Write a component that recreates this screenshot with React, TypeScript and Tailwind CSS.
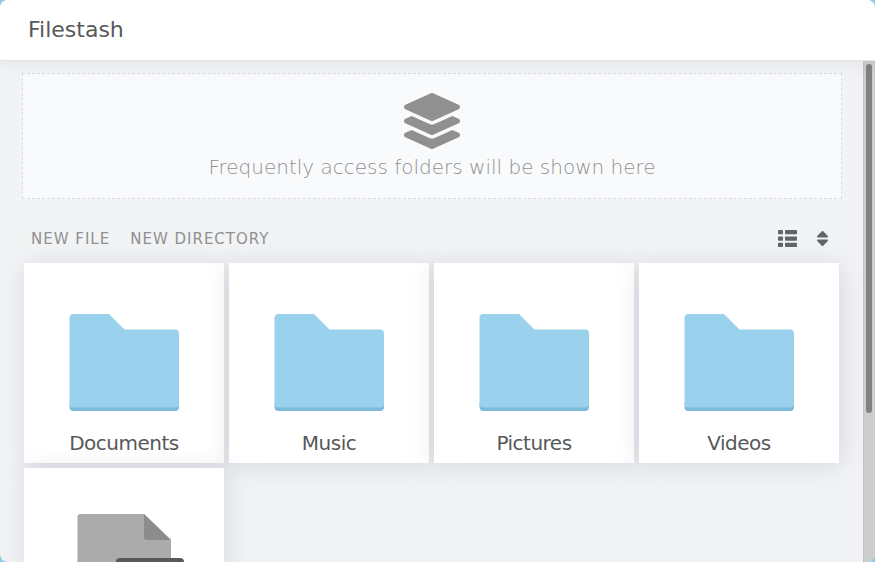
import React from "react";

const folders = ["Documents", "Music", "Pictures", "Videos"];

function LayersIcon() {
  return (
    <svg viewBox="0 0 512 512" className="size-14" fill="currentColor" aria-hidden="true">
      <path d="M12.41 148.02l232.94 105.67c6.8 3.09 14.49 3.09 21.29 0l232.94-105.67c16.55-7.51 16.55-32.52 0-40.03L266.65 2.31a25.607 25.607 0 0 0-21.29 0L12.41 107.98c-16.55 7.51-16.55 32.53 0 40.04zm487.18 88.28l-58.09-26.33-161.64 73.27c-7.56 3.43-15.59 5.17-23.86 5.17s-16.29-1.74-23.86-5.17L70.51 209.97l-58.1 26.33c-16.55 7.5-16.55 32.5 0 40l232.94 105.59c6.8 3.08 14.49 3.08 21.29 0L499.59 276.3c16.55-7.5 16.55-32.5 0-40zm0 127.8l-57.87-26.23-161.86 73.37c-7.56 3.43-15.59 5.17-23.86 5.17s-16.29-1.74-23.86-5.17L70.29 337.87 12.41 364.1c-16.55 7.5-16.55 32.5 0 40l232.94 105.59c6.8 3.08 14.49 3.08 21.29 0L499.59 404.1c16.55-7.5 16.55-32.5 0-40z" />
    </svg>
  );
}

function ListIcon() {
  return (
    <svg viewBox="0 0 19 17" className="h-[17px] w-[19px]" fill="currentColor" aria-hidden="true">
      <rect x="0" y="0" width="5" height="4.3" rx="0.8" />
      <rect x="7" y="0" width="12" height="4.3" rx="0.8" />
      <rect x="0" y="6.4" width="5" height="4.3" rx="0.8" />
      <rect x="7" y="6.4" width="12" height="4.3" rx="0.8" />
      <rect x="0" y="12.8" width="5" height="4.2" rx="0.8" />
      <rect x="7" y="12.8" width="12" height="4.2" rx="0.8" />
    </svg>
  );
}

function SortIcon() {
  return (
    <svg viewBox="0 0 11 15" className="h-[15px] w-[11px]" fill="currentColor" aria-hidden="true">
      <path d="M4.8.3Q5.5-.3 6.2.3L10.8 5Q11.3 6.2 10.2 6.4H.8Q-.3 6.2.2 5Z" />
      <path d="M4.8 14.7Q5.5 15.3 6.2 14.7L10.8 10Q11.3 8.8 10.2 8.6H.8Q-.3 8.8.2 10Z" />
    </svg>
  );
}

function FolderIcon() {
  return (
    <svg viewBox="0 0 110 98" className="h-[98px] w-[110px]" aria-hidden="true">
      <path fill="#7bbad8" d="M.5 90H110V94Q110 98 106 98H4.500Q.5 98 .5 94Z" />
      <path fill="#9ad1ed" d="M.5 5Q.5 1 4.500 1H40L55.500 16.500H106Q110 16.500 110 20.500V91Q110 94.500 106 94.500H4.500Q.5 94.500 .5 91Z" />
    </svg>
  );
}

function FileIcon() {
  return (
    <svg viewBox="0 0 94 116" className="h-[116px] w-[94px] shrink-0 overflow-visible" aria-hidden="true">
      <path fill="#ababab" d="M.5 4Q.5 1 3.500 1H67L94 27V113Q94 116 91 116H3.500Q.5 116 .5 113Z" />
      <path fill="#8c8c8c" d="M67 1L94 27H70Q67 27 67 24Z" />
      <rect x="39" y="45" width="68" height="30" rx="4" fill="#58595b" />
    </svg>
  );
}

const cardClass =
  "flex aspect-square w-full flex-col items-center bg-white shadow-[2px_3px_24px_rgba(70,70,100,0.15)]";

export default function App() {
  return (
    <div className="h-screen bg-[#8ecae6] font-['DejaVu_Sans',sans-serif] text-[#57595a]">
      <div className="flex h-full flex-col overflow-hidden rounded-lg bg-[#f1f3f5]">
        <header className="z-10 flex h-[61px] shrink-0 items-center border-b border-[#e2e2e3] bg-white px-7 shadow-[0_4px_20px_rgba(0,0,0,0.06)]">
          <h1 className="text-[22px] leading-7">Filestash</h1>
        </header>
        <div className="flex min-h-0 flex-1">
          <main className="min-w-0 flex-1 overflow-hidden pt-3 pr-[21px] pl-[22px]">
            <section className="flex h-[126px] flex-col items-center border border-dashed border-[#dcdddf] bg-[#f9fafc] pt-[19px] text-[#909090]">
              <LayersIcon />
              <p className="pt-1 text-[20px] leading-7 font-extralight">Frequently access folders will be shown here</p>
            </section>
            <div className="flex h-16 items-center justify-between pt-4 pr-3 pl-[9px]">
              <div className="flex gap-5 text-[15px] leading-6 tracking-[1px] text-[#909090]">
                <button type="button">NEW FILE</button>
                <button type="button">NEW DIRECTORY</button>
              </div>
              <div className="flex items-center gap-5 pr-0.5 pb-0.5 text-[#626469]">
                <button type="button" aria-label="List view"><ListIcon /></button>
                <button type="button" aria-label="Sort"><SortIcon /></button>
              </div>
            </div>
            <div className="mr-[3px] ml-0.5 grid grid-cols-4 gap-[5px]">
              {folders.map((name) => (
                <a key={name} href={"#" + name} className={cardClass + " pt-[50px]"}>
                  <FolderIcon />
                  <span className="pt-[18px] text-[20px] leading-7 tracking-tight">{name}</span>
                </a>
              ))}
              <a href="#file" aria-label="File" className={cardClass + " pt-[45px]"}>
                <FileIcon />
              </a>
            </div>
          </main>
          <div className="w-3 shrink-0 border-l border-[#c2c2c2] bg-[#cdcdcd] pt-[3px] pl-0.5">
            <div className="h-[70%] w-1.5 rounded-full bg-[#7f8182]" />
          </div>
        </div>
      </div>
    </div>
  );
}
